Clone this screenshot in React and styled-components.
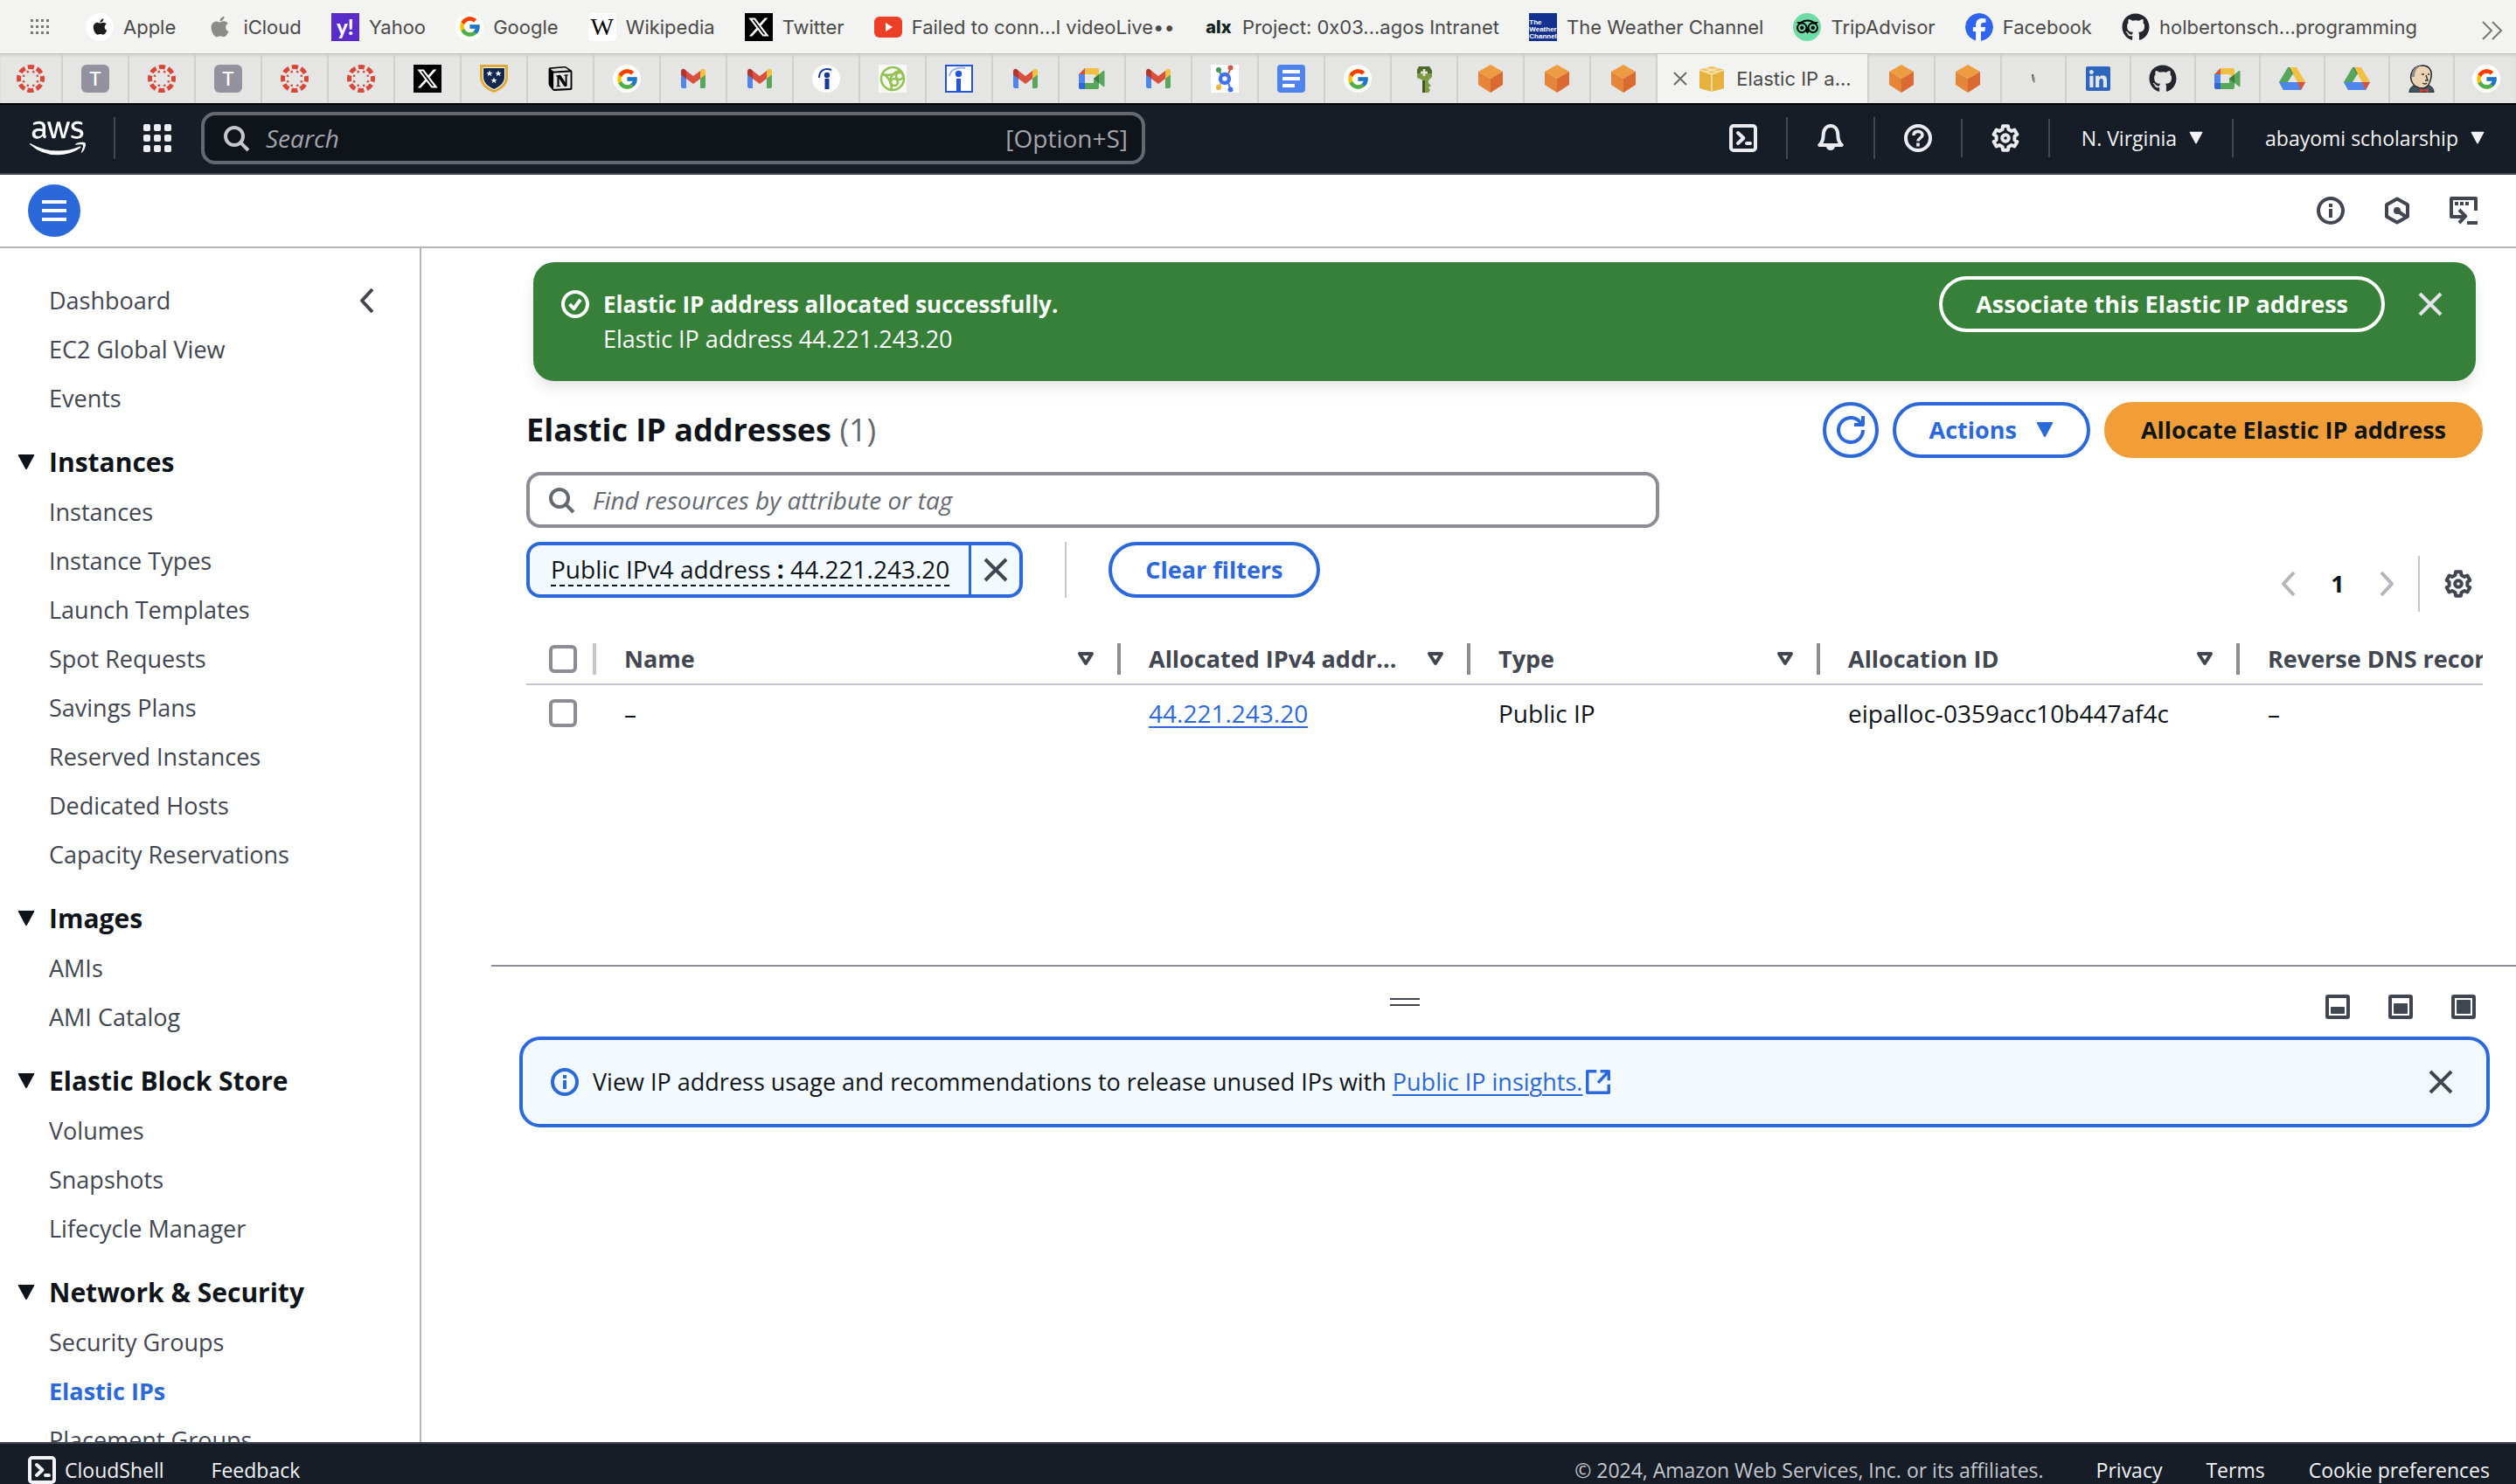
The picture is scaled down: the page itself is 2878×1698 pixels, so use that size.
import React from "react";
import styled, { createGlobalStyle, css } from "styled-components";
import { FaApple, FaAws, FaFacebook, FaGithub, FaLinkedin, FaXTwitter } from "react-icons/fa6";
import { FcGoogle } from "react-icons/fc";
import { SiNotion, SiTripadvisor } from "react-icons/si";

const ink = "#0f141a";
const slate = "#424650";
const grey = "#656871";
const line = "#8c8c94";
const softLine = "#c6c6cd";
const blue = "#2b68d9";
const night = "#161d26";
const sans = `"Open Sans", "Noto Sans", sans-serif`;

const GlobalStyle = createGlobalStyle`
  *, *::before, *::after { box-sizing: border-box; }
  body { margin: 0; background: #fff; color: ${ink}; font-family: ${sans}; font-size: 27px; line-height: 40px; }
  button, input { font: inherit; color: inherit; }
  button { padding: 0; border: 0; background: none; cursor: pointer; }
  a { color: inherit; text-decoration: none; }
  svg { display: block; flex: none; }
  ul { margin: 0; padding: 0; list-style: none; }
`;

/* ---------- icons ---------- */

const Glyph = ({ size = 32, cap = "butt", children }) => (
  <svg width={size} height={size} viewBox="0 0 16 16" fill="none" stroke="currentColor" strokeWidth="2" strokeLinejoin="round" strokeLinecap={cap} aria-hidden="true">
    {children}
  </svg>
);

const SearchIcon = () => (
  <Glyph><circle cx="7" cy="7" r="5" /><path d="M10.8 10.8 15 15" /></Glyph>
);
const CloseIcon = () => (
  <Glyph><path d="M2 2l12 12M14 2 2 14" /></Glyph>
);
const InfoIcon = () => (
  <Glyph><circle cx="8" cy="8" r="7" /><path d="M8 7v5M8 4v2" /></Glyph>
);
const CheckIcon = () => (
  <Glyph><circle cx="8" cy="8" r="7" /><path d="m4.8 8 2.4 2.6L11 5.4" /></Glyph>
);
const ShellIcon = () => (
  <Glyph cap="round"><rect x="1" y="1" width="14" height="14" rx="1.5" /><path d="m5 5 3.200 3L5 11M10 11h2" /></Glyph>
);
const BellIcon = () => (
  <Glyph>
    <path d="M1.600 12c1.600-1.500 2.200-3 2.200-5.400C3.800 3.200 5.500 1 8 1s4.200 2.200 4.200 5.600c0 2.400.6 3.900 2.200 5.400Z" />
    <path d="M5.500 13h5a2.600 2.800 0 0 1-5 0Z" fill="currentColor" stroke="none" />
  </Glyph>
);
const HelpIcon = () => (
  <Glyph>
    <circle cx="8" cy="8" r="7" />
    <path d="M5.500 6.500C5.500 5 6.500 4.200 8 4.200s2.500.8 2.500 2.100C10.500 8 8 7.900 8 9.800M8 10.800v2" strokeWidth="1.800" />
  </Glyph>
);
const gearPath = (() => {
  const pts = [];
  for (let i = 0; i < 6; i += 1) {
    const mid = (i * Math.PI) / 3;
    [[-0.33, 5.3], [-0.22, 7], [0.22, 7], [0.33, 5.3]].forEach(([d, r]) => {
      pts.push(`${(8 + r * Math.sin(mid + d)).toFixed(2)} ${(8 - r * Math.cos(mid + d)).toFixed(2)}`);
    });
  }
  return `M${pts.join("L")}Z`;
})();
const GearIcon = () => (
  <Glyph><path d={gearPath} /><circle cx="8" cy="8" r="1.9" /></Glyph>
);
const GridIcon = () => (
  <svg width="32" height="32" viewBox="0 0 32 32" fill="currentColor" aria-hidden="true">
    {[0, 12, 24].map((y) => [0, 12, 24].map((x) => <rect key={`${x}-${y}`} x={x} y={y} width="8" height="8" rx="2" />))}
  </svg>
);
const MenuIcon = () => (
  <svg width="28" height="24" viewBox="0 0 28 24" fill="currentColor" aria-hidden="true">
    <path d="M0 0h28v4H0zM0 10h28v4H0zM0 20h28v4H0z" />
  </svg>
);
const HexIcon = () => (
  <Glyph><path d="m8 1.200 6 3.400v6.800l-6 3.400-6-3.400V4.600Z" /><circle cx="8" cy="8" r="2" fill="currentColor" stroke="none" /><path d="m8 8 5 3.500" /></Glyph>
);
const CommandIcon = () => (
  <Glyph><path d="M15 8V1H1v10.500h8" /><path d="M3 4h2M6 4h2M9 4h2" /><path d="m5.500 7.500 3.600 3.700L5.500 15" /><path d="M10 15h6" /></Glyph>
);
const ChevronLeft = () => (
  <Glyph><path d="M11 1.500 5 8l6 6.500" /></Glyph>
);
const ChevronRight = () => (
  <Glyph><path d="m5 1.500 6 6.500-6 6.500" /></Glyph>
);
const RefreshIcon = () => (
  <Glyph><path d="M15 8a7 7 0 1 1-2.200-5.100L14.500 5" /><path d="M10 5h5V0" /></Glyph>
);
const ExternalIcon = () => (
  <Glyph size={28}><path d="M7 1H1v14h14V9.500" /><path d="M9.500 1H15v6M15 1 8 8.500" /></Glyph>
);
const Caret = ({ size = 20 }) => (
  <svg width={size} height={size} viewBox="0 0 20 20" fill="currentColor" aria-hidden="true">
    <path d="M1.500 1h17q1.200 0 .6 1.200l-8.200 15.200q-.9 1.200-1.800 0L.9 2.200Q.3 1 1.500 1Z" />
  </svg>
);
const SortIcon = () => (
  <svg width="20" height="18" viewBox="0 0 20 18" fill="none" stroke="currentColor" strokeWidth="4" strokeLinejoin="round" aria-hidden="true">
    <path d="M3 3h14l-7 11Z" />
  </svg>
);
const PanelIcon = ({ level }) => (
  <svg width="28" height="28" viewBox="0 0 28 28" aria-hidden="true">
    <rect x="2" y="2" width="24" height="24" rx="1" fill="none" stroke="currentColor" strokeWidth="4" />
    <rect x="6" y={22 - level} width="16" height={level} rx="1" fill="currentColor" />
  </svg>
);
const HandleIcon = () => (
  <svg width="34" height="10" viewBox="0 0 34 10" fill="currentColor" aria-hidden="true"><path d="M0 0h34v2H0zM0 7h34v2H0z" /></svg>
);

/* ---------- favicons ---------- */

const Fav = ({ children }) => (
  <svg width="32" height="32" viewBox="0 0 32 32" aria-hidden="true">{children}</svg>
);
const CanvasFav = () => (
  <Fav>
    <circle cx="16" cy="16" r="13.500" fill="none" stroke="#d8473a" strokeWidth="5" strokeDasharray="7.200 3.403" strokeDashoffset="3.600" />
    {[0, 1, 2, 3, 4, 5, 6, 7].map((i) => (
      <circle key={i} cx={16 + 8.5 * Math.cos((i * Math.PI) / 4 + 0.39)} cy={16 + 8.5 * Math.sin((i * Math.PI) / 4 + 0.39)} r="1.300" fill="#d8473a" />
    ))}
  </Fav>
);
const ShieldFav = () => (
  <Fav>
    <path d="M0 0h32v14c0 9-6 14-16 18C6 28 0 23 0 14Z" fill="#e0a93c" />
    <path d="M3 3h26v11c0 7-5 11.500-13 15C8 25.500 3 21 3 14Z" fill="#fff" />
    <path d="M4 4h24v10c0 6.500-4.500 10.500-12 14C8.500 24.500 4 20.500 4 14Z" fill="#12284d" />
    {[[11, 10], [21, 10], [16, 18]].map(([x, y]) => (
      <path key={`${x}${y}`} transform={`translate(${x} ${y})`} d="M0-3.500 1-1h2.600L1.500.600 2.300 3.200 0 1.600-2.300 3.200-1.500.600-3.600-1H-1Z" fill="#fff" />
    ))}
  </Fav>
);
const GmailFav = () => (
  <Fav>
    <path d="M2 9v16a2 2 0 0 0 2 2h4V14Z" fill="#4f86ec" />
    <path d="M30 9v16a2 2 0 0 1-2 2h-4V14Z" fill="#58a55c" />
    <path d="M8 7v9l8 6 8-6V7l-8 6Z" fill="#d85140" />
    <path d="M24 7v9l6-4.500V8c0-3-2.500-4-4.500-2.500Z" fill="#f1bf42" />
    <path d="M8 7v9l-6-4.500V8c0-3 2.500-4 4.500-2.500Z" fill="#b3352c" />
  </Fav>
);
const MeetFav = () => (
  <Fav>
    <path d="M1 11h7v11H1Z" fill="#4f86ec" />
    <path d="M1 11 8 4v7Z" fill="#d85140" />
    <path d="M8 4h14a2 2 0 0 1 2 2v10l-6-5H8Z" fill="#f1bf42" />
    <path d="M8 28h14a2 2 0 0 0 2-2V12l-6 4v5H8Z" fill="#58a55c" />
    <path d="M1 21h7v7H3a2 2 0 0 1-2-2Z" fill="#3266d5" />
    <path d="m18 16 11-9q1.500-.5 1.500 1v16q0 1.500-1.500 1Z" fill="#58a55c" />
    <path d="m18 16 6-5v10Z" fill="#3b7a43" />
  </Fav>
);
const DriveFav = () => (
  <Fav>
    <path d="M11 3h10l-5 9Z" fill="#3b8240" />
    <path d="M11 3 1 20l5 9 10-17Z" fill="#58a55c" />
    <path d="M21 3h-8l9 17h9Z" fill="#f1bf42" />
    <path d="M1 20h30l-5 9H6Z" fill="#4f86ec" />
    <path d="M22 20h9l-5 9Z" fill="#d85140" />
    <path d="m16 12 5 8H11Z" fill="#e5e5e3" />
  </Fav>
);
const CubeFav = () => (
  <Fav>
    <path d="m16 0 14 8-14 8L2 8Z" fill="#ee9c42" />
    <path d="M2 8v15l14 9V16Z" fill="#e5853a" />
    <path d="M30 8v15l-14 9V16Z" fill="#da6a32" />
  </Fav>
);
const Ec2Fav = () => (
  <Fav>
    <path d="m16 2 14 4v21l-14 4-14-4V6Z" fill="#e7b13e" />
    <path d="m16 2 14 4-14 5L2 6Z" fill="#f0c368" />
    <path d="M16 11v20M2 6l14 5 14-5M9 4l14 4.500M23 4 9 8.500" stroke="#f8e3b0" strokeWidth="1.600" fill="none" />
  </Fav>
);
const DocsFav = () => (
  <Fav>
    <rect width="32" height="32" rx="4" fill="#4f83ee" />
    <path d="M6 6h20v4H6zM6 14h20v4H6zM6 22h14v4H6z" fill="#fff" />
  </Fav>
);
const IndeedFav = () => (
  <Fav>
    <circle cx="16" cy="16" r="16" fill="#fff" />
    <circle cx="17" cy="12" r="3.200" fill="#17389c" />
    <path d="M14.500 16h5v12h-5Z" fill="#17389c" />
    <path d="M8 15C8 7 14 3 22 6" stroke="#17389c" strokeWidth="2" fill="none" />
  </Fav>
);
const SquareInfoFav = () => (
  <Fav>
    <rect x="1" y="1" width="30" height="30" fill="#fff" stroke="#2453dd" strokeWidth="2" />
    <circle cx="15.500" cy="10.500" r="3.700" fill="#2453dd" />
    <path d="M13 16h5v14h-5Z" fill="#2453dd" />
    <path d="M5 13c1-7 9-11 18-9" stroke="#9db4ee" strokeWidth="2" fill="none" />
  </Fav>
);
const GreenFav = () => (
  <Fav>
    <rect width="32" height="32" fill="#f8f8f6" />
    <g fill="none" stroke="#93c353" strokeWidth="2.600">
      <circle cx="16" cy="16" r="13" />
      <path d="M4 11c8 2 17 0 22-4" />
      <path d="M6 11c6 4 9 9 9 18" />
      <path d="M24 7c-5 1-9 5-11 10" />
      <circle cx="18" cy="20" r="4" />
      <circle cx="24" cy="13" r="4" />
    </g>
  </Fav>
);
const MoleculeFav = () => (
  <Fav>
    <rect width="32" height="32" fill="#fff" />
    <path d="m9 6 3 6" stroke="#3f9a57" strokeWidth="2" />
    <path d="m22.500 4-2.500 7" stroke="#cf5a4c" strokeWidth="2" />
    <path d="m9 26 3-6" stroke="#f1b33c" strokeWidth="2" />
    <path d="m22.500 28-2.500-7" stroke="#3f71f2" strokeWidth="2" />
    <circle cx="16" cy="16" r="5" fill="none" stroke="#3f71f2" strokeWidth="4.400" />
    <circle cx="9" cy="6" r="3" fill="#3f9a57" /><circle cx="22.500" cy="3.500" r="3" fill="#cf5a4c" />
    <circle cx="9" cy="26" r="3" fill="#f1b33c" /><circle cx="22.500" cy="28.500" r="3" fill="#3f71f2" />
  </Fav>
);
const KeyFav = () => (
  <Fav>
    <path d="M10 2h12l3 5v7l-4 4v3l3 3-3 2 2 3-2 3h-6V18l-7-3V6Z" fill="#7d9a45" />
    <path d="M14 18h3v14h-3Z" fill="#42591f" />
    <path d="M10 2h12l3 5v3H8V6Z" fill="#4f6a2a" />
    <path d="M16 5v8M12 9h8" stroke="#e5e5e3" strokeWidth="2.500" />
  </Fav>
);
const JenkinsFav = () => (
  <Fav>
    <path d="M2 32c0-6 4-8 8-9l12 0c5 1 8 4 8 9Z" fill="#3c5561" stroke="#222" strokeWidth="1" />
    <path d="M8 24c-4-4-5-8-4-13C6 3 11 1 17 1c8 0 11 6 10 13s-4 12-9 13c-4 0-7-1-10-3Z" fill="#ecd3b4" stroke="#222" strokeWidth="1.500" />
    <path d="M5 14C4 5 10 1 16 1c-5 2-8 5-8 13" fill="#8a8a86" />
    <path d="M16 11h3M23 11h2M21 12l2 6h-3M17 21q3 2 5 0" stroke="#333" strokeWidth="1.500" fill="none" />
    <path d="m14 27 5 2 5-2v5l-5-2-5 2Z" fill="#d33a32" />
  </Fav>
);
const TinyFav = () => (
  <Fav><path d="m14 11 2 0 1 10-2-3Z" fill="#555" /><path d="m18 13-2 5 2 3Z" fill="#b5a6a6" /></Fav>
);

const Badge = styled.span`
  display: inline-flex; flex: none; align-items: center; justify-content: center;
  width: 32px; height: 32px; overflow: hidden;
  border-radius: ${(p) => p.$radius || 0}px;
  background: ${(p) => p.$bg || "transparent"};
  color: ${(p) => p.$fg || "#fff"};
  font: ${(p) => p.$font || `bold 22px/32px "Inter", sans-serif`};
`;
const WeatherText = styled.span`
  font: bold 8px/8px "Liberation Sans", sans-serif;
  padding-top: 6px;
`;

const TBadge = () => <Badge $bg="#9393a0" $radius={6} $font={`500 22px/32px "Inter", sans-serif`}>T</Badge>;
const XBadge = () => <Badge $bg="#000"><FaXTwitter size={26} /></Badge>;
const GoogleBadge = () => <Badge $bg="#fff" $radius={16}><FcGoogle size={27} /></Badge>;
const NotionBadge = () => <Badge $fg="#000"><SiNotion size={28} /></Badge>;
const LinkedInBadge = () => <Badge $fg="#2c66bd"><FaLinkedin size={32} /></Badge>;
const GithubBadge = () => <Badge $fg="#23272d"><FaGithub size={32} /></Badge>;

/* ---------- browser chrome ---------- */

const Screen = styled.div`display: flex; flex-direction: column; height: 100vh; overflow: hidden;`;

const Bookmarks = styled.nav`
  display: flex; flex: none; align-items: center; height: 62px; padding: 0 15px 0 34px;
  background: #f3f3f1; color: #4a4a49; border-bottom: 1px solid #bdbdb9;
  font: 22px/32px "Inter", "Roboto", sans-serif;
`;
const BookmarkList = styled.ul`
  display: flex; flex: 1; justify-content: space-between; margin: 0 74px 0 40px;
`;
const Bookmark = styled.a`display: flex; align-items: center; gap: 11px; white-space: nowrap;`;

const bookmarks = [
  ["Apple", <Badge $bg="#fff" $fg="#1d1d1d" $radius={16}><FaApple size={21} /></Badge>],
  ["iCloud", <Badge $fg="#8b8b8a"><FaApple size={27} /></Badge>],
  ["Yahoo", <Badge $bg="#5a2bcb" $font={`900 24px/28px "Lato", sans-serif`}>y!</Badge>],
  ["Google", <GoogleBadge />],
  ["Wikipedia", <Badge $bg="#fff" $fg="#000" $radius={5} $font={`28px/32px "Liberation Serif", serif`}>W</Badge>],
  ["Twitter", <XBadge />],
  ["Failed to conn...l videoLive••", <Fav><rect y="4" width="32" height="24" rx="6" fill="#eb4026" /><path d="m13 11 8 5-8 5Z" fill="#fff" /></Fav>],
  ["Project: 0x03...agos Intranet", <Badge $fg="#10231f" $font={`800 20px/32px "Inter", sans-serif`}>alx</Badge>],
  ["The Weather Channel", <Badge $bg="#15318f"><WeatherText>The<br />Weather<br />Channel</WeatherText></Badge>],
  ["TripAdvisor", <Badge $bg="#6fdca5" $fg="#000" $radius={16}><SiTripadvisor size={25} /></Badge>],
  ["Facebook", <Badge $bg="#fff" $fg="#2f64f1" $radius={16}><FaFacebook size={32} /></Badge>],
  ["holbertonsch...programming", <GithubBadge />],
];

const TabStrip = styled.div`display: flex; flex: none; height: 56px; overflow: hidden; background: #e5e5e3; box-shadow: inset 0 2px 3px rgba(0, 0, 0, .08);`;
const tabWidths = { lead: 72, wide: 76, mid: 74, active: 242 };
const Tab = styled.button`
  display: flex; flex: 0 0 ${(p) => tabWidths[p.$kind]}px; align-items: center; justify-content: center; gap: 12px;
  border-right: 2px solid #cfcfcc; white-space: nowrap;
  font: 22px/32px "Inter", "Roboto", sans-serif; color: #4a4a49;
  ${(p) => p.$kind === "active" && css`background: #f3f3f1;`}
`;
const CloseMark = styled.span`display: flex; color: #6b6b6a;`;

const tabsBefore = [
  CanvasFav, TBadge, CanvasFav, TBadge, CanvasFav, CanvasFav, XBadge, ShieldFav, NotionBadge, GoogleBadge, GmailFav, GmailFav,
  IndeedFav, GreenFav, SquareInfoFav, GmailFav, MeetFav, GmailFav, MoleculeFav, DocsFav, GoogleBadge, KeyFav, CubeFav, CubeFav, CubeFav,
];
const tabsAfter = [
  [CubeFav, "wide"], [CubeFav, "wide"], [TinyFav, "mid"], [LinkedInBadge, "mid"], [GithubBadge, "mid"], [MeetFav, "mid"],
  [DriveFav, "mid"], [DriveFav, "mid"], [JenkinsFav, "mid"], [GoogleBadge, "mid"],
];

/* ---------- console header ---------- */

const TopBar = styled.header`
  display: flex; flex: none; align-items: center; height: 82px; padding: 0 36px 2px 34px;
  background: ${night}; color: #ebebf0; border-top: 2px solid #000; border-bottom: 2px solid ${slate};
`;
const Rule = styled.span`flex: none; width: 2px; height: ${(p) => p.$h || 48}px; background: ${(p) => p.$c || slate};`;
const IconButton = styled.button`display: inline-flex; flex: none; align-items: center; justify-content: center;`;
const Logo = styled.a`display: flex; margin-right: 32px; color: #fff;`;
const ServicesButton = styled(IconButton)`margin: 0 34px 0 32px;`;
const GlobalSearch = styled.label`
  display: flex; flex: 0 1 1080px; align-items: center; gap: 18px; height: 60px; padding: 0 16px 0 20px;
  border: 4px solid ${grey}; border-radius: 16px; background: ${ink}; color: #c6c6cd; font-size: 28px;
`;
const SearchInput = styled.input`
  flex: 1; min-width: 0; padding: 0; border: 0; outline: 0; background: none;
  &::placeholder { color: ${(p) => p.$hint}; font-style: italic; opacity: 1; }
`;
const Shortcut = styled.span`color: #a4a4ad;`;
const TopActions = styled.div`display: flex; align-items: center; gap: 33px; margin-left: auto;`;
const MenuButton = styled.button`
  display: inline-flex; align-items: center; gap: 14px; padding-left: 3px; white-space: nowrap;
  font-size: 23px; font-weight: 500; line-height: 40px; color: #f3f3f7;
`;

const ToolRow = styled.div`
  display: flex; flex: none; align-items: center; justify-content: space-between; height: 84px; padding: 0 44px 0 32px;
  border-bottom: 2px solid #b4b4bb; color: ${slate};
`;
const RoundMenu = styled(IconButton)`width: 60px; height: 60px; border-radius: 50%; background: ${blue}; color: #fff;`;
const ToolIcons = styled.div`display: flex; gap: 44px;`;

/* ---------- side navigation ---------- */

const Body = styled.div`display: flex; flex: 1; min-height: 0;`;
const SideNav = styled.nav`
  flex: 0 0 482px; padding: 32px 44px 0 20px; overflow: hidden; border-right: 2px solid #b4b4bb; color: ${slate};
`;
const NavTop = styled.div`display: flex; align-items: flex-start; justify-content: space-between;`;
const NavLink = styled.a`
  display: block; padding-left: 36px; line-height: 56px;
  ${(p) => p.$active && css`color: ${blue}; font-weight: 700;`}
`;
const NavHeading = styled.button`
  display: flex; align-items: center; gap: 16px; height: 58px; margin-top: 16px;
  color: ${ink}; font-size: 30px; font-weight: 700;
`;
const CollapseButton = styled(IconButton)`height: 56px;`;

const sections = [
  ["Instances", ["Instances", "Instance Types", "Launch Templates", "Spot Requests", "Savings Plans", "Reserved Instances", "Dedicated Hosts", "Capacity Reservations"]],
  ["Images", ["AMIs", "AMI Catalog"]],
  ["Elastic Block Store", ["Volumes", "Snapshots", "Lifecycle Manager"]],
  ["Network & Security", ["Security Groups", "Elastic IPs", "Placement Groups"]],
];

/* ---------- main ---------- */

const Workspace = styled.main`display: flex; flex: 1; flex-direction: column; min-width: 0;`;
const Content = styled.section`flex: 1; min-height: 0; padding: 16px 38px 0 120px;`;
const Flash = styled.div`
  display: flex; align-items: flex-start; height: 136px; margin: 0 8px; padding: 16px 36px 16px 32px;
  border-radius: 24px; background: #378039; color: #fff; box-shadow: 0 8px 16px rgba(0, 0, 0, .1);
`;
const FlashStatus = styled.span`display: flex; align-items: center; height: 64px;`;
const FlashText = styled.div`
  flex: 1; padding: 12px 0 0 16px;
  strong { display: block; font-size: 26px; font-weight: 700; }
`;
const Pill = styled.button`
  display: inline-flex; align-items: center; justify-content: center; gap: 22px; height: 64px; padding: 0 38px;
  border: 4px solid currentColor; border-radius: 32px; color: ${(p) => (p.$light ? "#fff" : blue)};
  font-size: 27px; font-weight: 700; white-space: nowrap;
  ${(p) => p.$primary && css`border-color: #f19e39; background: #f19e39; color: ${ink};`}
`;
const RoundPill = styled(Pill)`width: 64px; padding: 0;`;
const FlashClose = styled(IconButton)`height: 64px; margin-left: 36px; color: #e3e3e8;`;

const TitleRow = styled.div`display: flex; align-items: center; justify-content: space-between; margin-top: 24px;`;
const Title = styled.h1`
  margin: 0; font-size: 36px; line-height: 48px; font-weight: 700;
  span { color: ${grey}; font-weight: 400; }
`;
const ButtonGroup = styled.div`display: flex; gap: 16px;`;

const FilterRow = styled.div`display: flex; align-items: flex-end; justify-content: space-between; margin-top: 16px; font-size: 28px;`;
const FilterBlock = styled.div`display: flex; flex: 0 1 1296px; flex-direction: column; gap: 16px; padding-bottom: 16px;`;
const FilterSearch = styled.label`
  display: flex; align-items: center; gap: 20px; height: 64px; padding: 0 20px;
  border: 4px solid ${line}; border-radius: 16px; color: ${grey};
`;
const TokenRow = styled.div`display: flex; align-items: center;`;
const Token = styled.div`
  display: flex; height: 64px; border: 4px solid ${blue}; border-radius: 16px; background: #f2faff; overflow: hidden;
`;
const TokenText = styled.button`
  padding: 0 22px 0 24px;
  span { display: block; border-bottom: 2px dashed ${ink}; line-height: 36px; white-space: nowrap; }
`;
const TokenClose = styled(IconButton)`width: 58px; border-left: 3px solid ${blue}; color: ${slate};`;
const TokenRule = styled(Rule)`margin: 0 48px;`;

const Pagination = styled.div`display: flex; align-items: center; height: 64px; padding-right: 12px; color: #b4b4bb;`;
const PageNumber = styled.button`width: 80px; color: ${ink}; font-size: 27px; font-weight: 700;`;
const PageRule = styled(Rule)`margin: 0 28px 0 20px;`;
const Preferences = styled(IconButton)`color: ${slate};`;

const TableWrap = styled.div`margin-top: 26px; overflow: hidden;`;
const Table = styled.table`
  width: 2440px; border-collapse: separate; border-spacing: 0; table-layout: fixed; text-align: left;
`;
const Th = styled.th`padding: 0; height: 58px; border-bottom: 2px solid ${softLine}; color: ${slate}; font-size: 27px; font-weight: 700;`;
const ThInner = styled.div`
  display: flex; align-items: center; height: 56px; padding-left: ${(p) => p.$pad}px;
`;
const ThLabel = styled.span`flex: 1; white-space: nowrap;`;
const ThRule = styled(Rule)`width: 4px; margin-left: 26px;`;
const SelectRule = styled(Rule)`width: 4px; margin-left: auto;`;
const Td = styled.td`height: 64px; padding: 0 0 0 ${(p) => p.$pad}px; font-size: 28px; white-space: nowrap;`;
const Check = styled.input`
  display: block; flex: none; width: 32px; height: 32px; margin: 0; appearance: none;
  border: 4px solid ${line}; border-radius: 6px; background: #fff;
`;
const TextLink = styled.a`color: ${blue}; text-decoration: underline; text-decoration-thickness: 2px; text-underline-offset: 4px;`;

const columns = [["Name", 600], ["Allocated IPv4 addr...", 400], ["Type", 400], ["Allocation ID", 480], ["Reverse DNS record", 480]];

/* ---------- split panel ---------- */

const SplitPanel = styled.section`flex: 0 0 546px; margin-left: 80px; border-top: 2px solid ${line};`;
const PanelBar = styled.div`
  display: grid; grid-template-columns: 1fr auto 1fr; align-items: start; height: 80px; padding: 32px 46px 0 0; color: ${slate};
`;
const Handle = styled(IconButton)`grid-column: 2; margin: 4px 180px 0 0;`;
const PanelButtons = styled.div`display: flex; gap: 44px; justify-self: end;`;
const Alert = styled.div`
  display: flex; align-items: center; height: 104px; margin: 0 30px 0 32px; padding: 0 36px 0 32px;
  border: 4px solid ${blue}; border-radius: 24px; background: #f2faff;
`;
const AlertIcon = styled.span`color: ${blue}; margin-right: 16px;`;
const AlertText = styled.p`display: flex; flex: 1; align-items: center; margin: 0; white-space: pre;`;
const AlertLink = styled(TextLink)`display: inline-flex; align-items: center; gap: 4px;`;
const AlertClose = styled(IconButton)`color: ${slate};`;

const Footer = styled.footer`
  display: flex; flex: none; align-items: flex-start; justify-content: space-between; height: 48px; padding: 10px 30px 0 32px;
  overflow: hidden; border-top: 2px solid ${slate}; background: ${night}; color: #f3f3f7; font-size: 23px;
`;
const FooterGroup = styled.div`display: flex; gap: 50px; font-weight: 500; white-space: nowrap;`;
const ShellButton = styled.button`display: flex; align-items: flex-start; gap: 10px; margin-right: 4px; svg { margin-top: 4px; }`;
const Legal = styled.span`margin-right: 10px; color: #c6c6cd;`;

export default function App() {
  return (
    <Screen>
      <GlobalStyle />
      <Bookmarks aria-label="Bookmarks">
        <svg width="24" height="18" viewBox="0 0 24 18" fill="#777" aria-hidden="true">
          {[0, 7, 14].map((y) => [0, 6, 12, 18].map((x) => <rect key={`${x}-${y}`} x={x + 1} y={y} width="3" height="3" />))}
        </svg>
        <BookmarkList>
          {bookmarks.map(([name, icon]) => (
            <li key={name}><Bookmark href="#">{icon}{name}</Bookmark></li>
          ))}
        </BookmarkList>
        <IconButton aria-label="More bookmarks">
          <svg width="24" height="32" viewBox="0 0 24 32" fill="none" stroke="#777" strokeWidth="2"><path d="m1 10 10 10L1 30M12 10l10 10-10 10" /></svg>
        </IconButton>
      </Bookmarks>

      <TabStrip>
        {tabsBefore.map((Icon, i) => (
          <Tab key={i} $kind={i === 0 ? "lead" : "wide"} aria-label={`Tab ${i + 1}`}><Icon /></Tab>
        ))}
        <Tab $kind="active">
          <CloseMark><svg width="16" height="16" viewBox="0 0 16 16" fill="none" stroke="currentColor" strokeWidth="2"><path d="m1 1 14 14M15 1 1 15" /></svg></CloseMark>
          <Ec2Fav />
          Elastic IP a...
        </Tab>
        {tabsAfter.map(([Icon, kind], i) => (
          <Tab key={i} $kind={kind} aria-label={`Tab ${i + 27}`}><Icon /></Tab>
        ))}
      </TabStrip>

      <TopBar>
        <Logo href="#" aria-label="AWS home"><FaAws size={64} /></Logo>
        <Rule />
        <ServicesButton aria-label="Services"><GridIcon /></ServicesButton>
        <GlobalSearch>
          <SearchIcon />
          <SearchInput type="text" aria-label="Search" placeholder="Search" $hint="#a4a4ad" />
          <Shortcut>[Option+S]</Shortcut>
        </GlobalSearch>
        <TopActions>
          <IconButton aria-label="CloudShell"><ShellIcon /></IconButton>
          <Rule />
          <IconButton aria-label="Notifications"><BellIcon /></IconButton>
          <Rule />
          <IconButton aria-label="Help"><HelpIcon /></IconButton>
          <Rule $h={44} />
          <IconButton aria-label="Settings"><GearIcon /></IconButton>
          <Rule $h={44} />
          <MenuButton>N. Virginia <Caret size={16} /></MenuButton>
          <Rule $h={44} />
          <MenuButton>abayomi scholarship <Caret size={16} /></MenuButton>
        </TopActions>
      </TopBar>

      <ToolRow>
        <RoundMenu aria-label="Open navigation"><MenuIcon /></RoundMenu>
        <ToolIcons>
          <IconButton aria-label="Info"><InfoIcon /></IconButton>
          <IconButton aria-label="Diagnostics"><HexIcon /></IconButton>
          <IconButton aria-label="Commands"><CommandIcon /></IconButton>
        </ToolIcons>
      </ToolRow>

      <Body>
        <SideNav aria-label="EC2">
          <NavTop>
            <ul>
              {["Dashboard", "EC2 Global View", "Events"].map((t) => <li key={t}><NavLink href="#">{t}</NavLink></li>)}
            </ul>
            <CollapseButton aria-label="Collapse navigation"><ChevronLeft /></CollapseButton>
          </NavTop>
          {sections.map(([heading, items]) => (
            <div key={heading}>
              <NavHeading><Caret />{heading}</NavHeading>
              <ul>
                {items.map((t) => <li key={t}><NavLink href="#" $active={t === "Elastic IPs"}>{t}</NavLink></li>)}
              </ul>
            </div>
          ))}
        </SideNav>

        <Workspace>
          <Content>
            <Flash role="status">
              <FlashStatus><CheckIcon /></FlashStatus>
              <FlashText><strong>Elastic IP address allocated successfully.</strong>Elastic IP address 44.221.243.20</FlashText>
              <Pill $light>Associate this Elastic IP address</Pill>
              <FlashClose aria-label="Dismiss"><CloseIcon /></FlashClose>
            </Flash>

            <TitleRow>
              <Title>Elastic IP addresses <span>(1)</span></Title>
              <ButtonGroup>
                <RoundPill aria-label="Refresh"><RefreshIcon /></RoundPill>
                <Pill>Actions <Caret /></Pill>
                <Pill $primary>Allocate Elastic IP address</Pill>
              </ButtonGroup>
            </TitleRow>

            <FilterRow>
              <FilterBlock>
                <FilterSearch>
                  <SearchIcon />
                  <SearchInput type="text" aria-label="Find resources" placeholder="Find resources by attribute or tag" $hint={grey} />
                </FilterSearch>
                <TokenRow>
                  <Token>
                    <TokenText><span>Public IPv4 address <b>:</b> 44.221.243.20</span></TokenText>
                    <TokenClose aria-label="Remove filter"><CloseIcon /></TokenClose>
                  </Token>
                  <TokenRule $h={64} $c={softLine} />
                  <Pill>Clear filters</Pill>
                </TokenRow>
              </FilterBlock>
              <Pagination>
                <IconButton aria-label="Previous page"><ChevronLeft /></IconButton>
                <PageNumber>1</PageNumber>
                <IconButton aria-label="Next page"><ChevronRight /></IconButton>
                <PageRule $h={64} $c={softLine} />
                <Preferences aria-label="Preferences"><GearIcon /></Preferences>
              </Pagination>
            </FilterRow>

            <TableWrap>
              <Table>
                <colgroup>
                  <col width="80" />
                  {columns.map(([name, w]) => <col key={name} width={w} />)}
                </colgroup>
                <thead>
                  <tr>
                    <Th>
                      <ThInner $pad={26}><Check type="checkbox" aria-label="Select all" /><SelectRule $h={36} $c={softLine} /></ThInner>
                    </Th>
                    {columns.map(([name]) => (
                      <Th key={name}>
                        <ThInner $pad={32}><ThLabel>{name}</ThLabel><SortIcon /><ThRule $h={36} $c={line} /></ThInner>
                      </Th>
                    ))}
                  </tr>
                </thead>
                <tbody>
                  <tr>
                    <Td $pad={26}><Check type="checkbox" aria-label="Select row" /></Td>
                    <Td $pad={32}>–</Td>
                    <Td $pad={32}><TextLink href="#">44.221.243.20</TextLink></Td>
                    <Td $pad={32}>Public IP</Td>
                    <Td $pad={32}>eipalloc-0359acc10b447af4c</Td>
                    <Td $pad={32}>–</Td>
                  </tr>
                </tbody>
              </Table>
            </TableWrap>
          </Content>

          <SplitPanel>
            <PanelBar>
              <Handle aria-label="Resize panel"><HandleIcon /></Handle>
              <PanelButtons>
                <IconButton aria-label="Small panel"><PanelIcon level={8} /></IconButton>
                <IconButton aria-label="Medium panel"><PanelIcon level={12} /></IconButton>
                <IconButton aria-label="Large panel"><PanelIcon level={16} /></IconButton>
              </PanelButtons>
            </PanelBar>
            <Alert>
              <AlertIcon><InfoIcon /></AlertIcon>
              <AlertText>
                {"View IP address usage and recommendations to release unused IPs with "}
                <AlertLink href="#">Public IP insights.<ExternalIcon /></AlertLink>
              </AlertText>
              <AlertClose aria-label="Dismiss"><CloseIcon /></AlertClose>
            </Alert>
          </SplitPanel>
        </Workspace>
      </Body>

      <Footer>
        <FooterGroup>
          <ShellButton><ShellIcon />CloudShell</ShellButton>
          <a href="#">Feedback</a>
        </FooterGroup>
        <FooterGroup>
          <Legal>© 2024, Amazon Web Services, Inc. or its affiliates.</Legal>
          <a href="#">Privacy</a>
          <a href="#">Terms</a>
          <a href="#">Cookie preferences</a>
        </FooterGroup>
      </Footer>
    </Screen>
  );
}
